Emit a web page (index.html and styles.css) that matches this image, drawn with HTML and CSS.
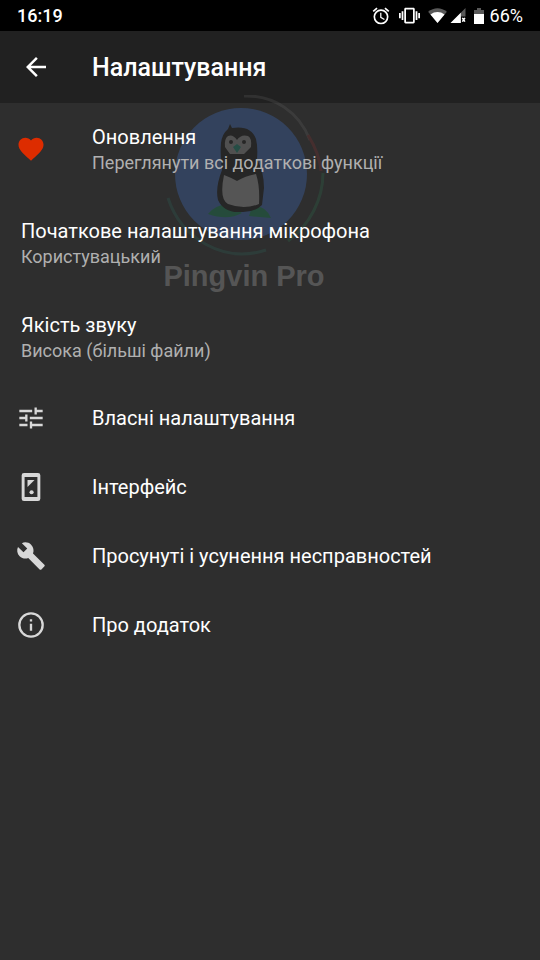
FILE: index.html
```
<!DOCTYPE html>
<html lang="uk">
<head>
    <meta charset="UTF-8">
    <meta name="viewport" content="width=device-width, initial-scale=1.0">
    <title>Налаштування</title>
    <link rel="stylesheet" href="styles.css">
</head>
<body>
    <div class="status-bar">
        <span class="clock">16:19</span>
        <div class="status-icons">
            <svg class="alarm" viewBox="0 0 24 24">
                <path d="M22 5.7l-4.6-3.9-1.3 1.5 4.6 3.9L22 5.7zM7.9 3.4L6.6 1.9 2 5.7l1.3 1.5 4.6-3.8zM12.5 8H11v6l4.7 2.9.8-1.3-4-2.3V8zM12 4a9 9 0 1 0 0 18 9 9 0 0 0 0-18zm0 16a7 7 0 1 1 0-14 7 7 0 0 1 0 14z"/>
            </svg>
            <svg class="vibrate" viewBox="0 0 24 24">
                <path d="M0 15h2V9H0v6zm3 2h2V7H3v10zm19-8v6h2V9h-2zm-3 8h2V7h-2v10zM16.500 3h-9C6.700 3 6 3.700 6 4.500v15c0 .8.7 1.500 1.500 1.500h9c.8 0 1.500-.7 1.500-1.500v-15c0-.8-.7-1.500-1.500-1.500zM16 19H8V5h8v14z"/>
            </svg>
            <svg class="wifi" viewBox="0 0 20 16">
                <path class="faint" d="M0 4C6-1 14-1 20 4L10 16z"/>
                <path d="M2.500 7C7 3.500 13 3.500 17.500 7L10 16z"/>
            </svg>
            <svg class="signal" viewBox="0 0 16 16">
                <path class="faint" d="M0 16L16 0v9h-5v7z"/>
                <path d="M0 16L11 5v11zM12 11l1-1 1 1 1-1 1 1-1 1.500 1 1.500-1 1-1-1-1 1-1-1 1-1.500z"/>
            </svg>
            <svg class="battery" viewBox="0 0 10 16">
                <path class="faint" d="M3 0h4v2h3v4H0V2h3z"/>
                <path d="M0 6h10v10H0z"/>
            </svg>
            <span>66%</span>
        </div>
    </div>

    <header class="app-bar">
        <button class="back" type="button" aria-label="Назад">
            <svg viewBox="0 0 24 24"><path d="M20 11H7.800l5.600-5.600L12 4l-8 8 8 8 1.400-1.400L7.800 13H20v-2z"/></svg>
        </button>
        <h1>Налаштування</h1>
    </header>

    <main class="settings">
        <a class="item two-line" href="#updates">
            <svg class="icon heart" viewBox="0 0 24 24">
                <path d="M12 21.300l-1.500-1.300C5.400 15.400 2 12.300 2 8.500 2 5.400 4.400 3 7.500 3c1.700 0 3.400.8 4.500 2.100C13.100 3.800 14.800 3 16.500 3 19.600 3 22 5.400 22 8.500c0 3.800-3.400 6.900-8.600 11.500L12 21.300z"/>
            </svg>
            <div class="text">
                <span class="title">Оновлення</span>
                <span class="summary">Переглянути всі додаткові функції</span>
            </div>
        </a>
        <a class="item two-line" href="#microphone">
            <div class="text">
                <span class="title">Початкове налаштування мікрофона</span>
                <span class="summary">Користувацький</span>
            </div>
        </a>
        <a class="item two-line" href="#quality">
            <div class="text">
                <span class="title">Якість звуку</span>
                <span class="summary">Висока (більші файли)</span>
            </div>
        </a>
        <a class="item" href="#custom">
            <svg class="icon" viewBox="0 0 24 24">
                <path d="M2 17v2h7v-2H2zM2 5v2h11V5H2zm11 16v-2h9v-2h-9v-2h-2v6h2zM7 9v2H2v2h5v2h2V9H7zm15 4v-2H11v2h11zm-7-4h2V7h5V5h-5V3h-2v6z"/>
            </svg>
            <span class="title">Власні налаштування</span>
        </a>
        <a class="item" href="#interface">
            <svg class="icon" viewBox="0 0 24 24">
                <path fill-rule="evenodd" d="M6 0h12a2 2 0 0 1 2 2v20a2 2 0 0 1-2 2H6a2 2 0 0 1-2-2V2a2 2 0 0 1 2-2zm.5 3.500v17h11v-17h-11z"/>
                <path d="M9 6h6l-6 6z"/>
                <circle cx="12.500" cy="16.500" r="1.800"/>
            </svg>
            <span class="title">Інтерфейс</span>
        </a>
        <a class="item" href="#advanced">
            <svg class="icon wrench" viewBox="0 0 24 24">
                <path d="M22.700 19l-9.100-9.100c.9-2.300.4-5-1.500-6.900-2-2-5-2.400-7.400-1.300L9 6 6 9 1.600 4.700C.4 7.100.9 10.100 2.900 12.100c1.900 1.900 4.600 2.400 6.900 1.500l9.100 9.100c.4.4 1 .4 1.400 0l2.300-2.300c.5-.4.5-1.100.1-1.400z"/>
            </svg>
            <span class="title">Просунуті і усунення несправностей</span>
        </a>
        <a class="item" href="#about">
            <svg class="icon" viewBox="0 0 24 24">
                <path d="M11 17h2v-6h-2v6zM12 1a11 11 0 1 0 0 22 11 11 0 0 0 0-22zm0 20a9 9 0 1 1 0-18 9 9 0 0 1 0 18zM11 9h2V7h-2v2z"/>
            </svg>
            <span class="title">Про додаток</span>
        </a>
    </main>

    <div class="watermark">
        <svg viewBox="0 0 164 164">
            <g class="ring">
                <path stroke="#777" d="M82 1C112 0 137 17 148 45"/>
                <path stroke="#a33" d="M146 40C154 53 158 64 159 76"/>
                <path stroke="#2a8a5c" d="M161 78C161 104 148 130 126 146"/>
                <path stroke="#2a7a6c" d="M104 155C61 169 19 143 6 103"/>
            </g>
            <circle cx="79" cy="79" r="66" fill="#3f6ec0"/>
            <path fill="#158a58" d="M46 119q7-9 20-10l14 9q-14 8-34 1zM90 112q13-3 19 11l-22-2z"/>
            <path fill="#161616" d="M66 34l2-5 2 4q19-3 24 11 2 8 1 20 7 13 7 29l-2 17q-8 8-22 7-16 1-22-12-3-12 4-30-2-13-1-27 1-9 7-14z"/>
            <path fill="#a8a8a8" d="M62 80q8 3 13 6 8-5 19-7 4 12 3 30-15 6-31 0-9-5-4-29z"/>
            <path fill="#999" d="M75 45q-4-6-9-4-4 3-3 11l5 7h14l7-7q1-9-3-11-7-2-11 4z"/>
            <circle cx="69" cy="47" r="2" fill="#161616"/>
            <circle cx="82" cy="47" r="2" fill="#161616"/>
            <path fill="#169078" d="M71 52l4-3 4 3-4 6z"/>
        </svg>
        <span>Pingvin Pro</span>
    </div>
</body>
</html>
```
FILE: styles.css
```
* {
    box-sizing: border-box;
}
body {
    margin: 0;
    min-height: 100vh;
    position: relative;
    font-family: Roboto, "Noto Sans", sans-serif;
    background-color: #2e2e2e;
    color: #fff;
}
svg {
    display: block;
    fill: currentColor;
}
.status-bar {
    display: flex;
    justify-content: space-between;
    align-items: center;
    height: 31px;
    padding: 0 17px;
    background-color: #000;
    font-size: 18px;
    font-weight: 500;
}
.status-icons {
    display: flex;
    align-items: center;
    gap: 8px;
}
.status-icons span {
    margin-left: -2px;
    font-weight: 400;
}
.alarm {
    width: 20px;
    height: 20px;
}
.vibrate {
    width: 21px;
    height: 21px;
}
.wifi {
    width: 19px;
    height: 15px;
}
.signal {
    width: 16px;
    height: 15px;
    margin-left: -5px;
}
.battery {
    width: 10px;
    height: 16px;
}
.faint {
    opacity: 0.35;
}
.app-bar {
    display: flex;
    align-items: center;
    height: 72px;
    padding: 0 21px;
    background-color: #212121;
}
.back {
    width: 71px;
    padding: 0;
    border: none;
    background: none;
    color: #fff;
    cursor: pointer;
}
.back svg {
    width: 30px;
    height: 30px;
}
h1 {
    margin: 0;
    font-size: 25px;
    font-weight: 500;
}
.settings {
    position: relative;
    z-index: 1;
}
.item {
    display: flex;
    align-items: center;
    min-height: 69px;
    padding: 0 17px 4px;
    color: #fff;
    text-decoration: none;
}
.two-line {
    min-height: 94px;
    padding-bottom: 2px;
}
.icon {
    width: 28px;
    height: 28px;
    margin-right: 47px;
    color: #d8d8d8;
}
.heart {
    width: 30px;
    height: 30px;
    margin-left: -1px;
    margin-right: 46px;
    color: #dd2c00;
}
.wrench {
    width: 30px;
    height: 30px;
    margin-left: -1px;
    margin-right: 46px;
}
.text {
    display: flex;
    flex-direction: column;
}
.text:first-child {
    padding-left: 4px;
}
.title {
    font-size: 20px;
    line-height: 28px;
}
.summary {
    font-size: 18px;
    line-height: 24px;
    color: #b0b0b0;
}
.watermark {
    position: absolute;
    top: 95px;
    left: 30%;
    width: 164px;
    display: flex;
    flex-direction: column;
    align-items: center;
    opacity: 0.32;
    pointer-events: none;
    font-family: "Liberation Sans", Arial, sans-serif;
    font-size: 29px;
    font-weight: 700;
    line-height: 34px;
    white-space: nowrap;
    color: #a8a8a8;
}
.watermark svg {
    width: 164px;
    height: 164px;
}
.ring {
    fill: none;
    stroke-width: 3;
    opacity: 0.6;
}
```
